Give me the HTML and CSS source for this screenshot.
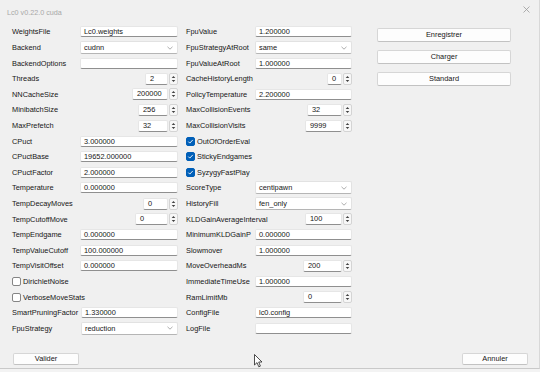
FILE: index.html
```html
<!DOCTYPE html>
<html lang="fr">
<head>
<meta charset="utf-8">
<title>Lc0 v0.22.0 cuda</title>
<link rel="stylesheet" href="styles.css">
</head>
<body>
<div class="window">
  <div class="titlebar">
    <span class="title">Lc0 v0.22.0 cuda</span>
    <svg class="close" width="7" height="7" viewBox="0 0 7 7"><path d="M0.5 0.5 L6.5 6.5 M6.5 0.5 L0.5 6.5" stroke="#9a9a9a" stroke-width="0.8"/></svg>
  </div>
  <div class="main">
    <div class="grid">
      <span class="lbl">WeightsFile</span><div class="text">Lc0.weights</div>
      <span class="lbl">Backend</span><div class="combo"><span>cudnn</span><svg class="chev" width="6" height="4" viewBox="0 0 6 4"><path d="M0.5 0.8 L3 3.2 L5.5 0.8" fill="none" stroke="#8a8a8a" stroke-width="0.7"/></svg></div>
      <span class="lbl">BackendOptions</span><div class="text"></div>
      <span class="lbl">Threads</span><div class="spin w33"><div class="spin-in">2</div><div class="spin-btn"><svg width="5" height="8" viewBox="0 0 5 8"><path d="M2.5 1 L4.3 3 L0.7 3 Z M2.5 7 L4.3 5 L0.7 5 Z" fill="#444"/></svg></div></div>
      <span class="lbl">NNCacheSize</span><div class="spin w46"><div class="spin-in">200000</div><div class="spin-btn"><svg width="5" height="8" viewBox="0 0 5 8"><path d="M2.5 1 L4.3 3 L0.7 3 Z M2.5 7 L4.3 5 L0.7 5 Z" fill="#444"/></svg></div></div>
      <span class="lbl">MinibatchSize</span><div class="spin w40"><div class="spin-in">256</div><div class="spin-btn"><svg width="5" height="8" viewBox="0 0 5 8"><path d="M2.5 1 L4.3 3 L0.7 3 Z M2.5 7 L4.3 5 L0.7 5 Z" fill="#444"/></svg></div></div>
      <span class="lbl">MaxPrefetch</span><div class="spin w40"><div class="spin-in">32</div><div class="spin-btn"><svg width="5" height="8" viewBox="0 0 5 8"><path d="M2.5 1 L4.3 3 L0.7 3 Z M2.5 7 L4.3 5 L0.7 5 Z" fill="#444"/></svg></div></div>
      <span class="lbl">CPuct</span><div class="text">3.000000</div>
      <span class="lbl">CPuctBase</span><div class="text">19652.000000</div>
      <span class="lbl">CPuctFactor</span><div class="text">2.000000</div>
      <span class="lbl">Temperature</span><div class="text">0.000000</div>
      <span class="lbl">TempDecayMoves</span><div class="spin w35"><div class="spin-in">0</div><div class="spin-btn"><svg width="5" height="8" viewBox="0 0 5 8"><path d="M2.5 1 L4.3 3 L0.7 3 Z M2.5 7 L4.3 5 L0.7 5 Z" fill="#444"/></svg></div></div>
      <span class="lbl">TempCutoffMove</span><div class="spin w43"><div class="spin-in">0</div><div class="spin-btn"><svg width="5" height="8" viewBox="0 0 5 8"><path d="M2.5 1 L4.3 3 L0.7 3 Z M2.5 7 L4.3 5 L0.7 5 Z" fill="#444"/></svg></div></div>
      <span class="lbl">TempEndgame</span><div class="text">0.000000</div>
      <span class="lbl">TempValueCutoff</span><div class="text">100.000000</div>
      <span class="lbl">TempVisitOffset</span><div class="text">0.000000</div>
      <label class="check"><span class="box"></span>DirichletNoise</label>
      <label class="check"><span class="box"></span>VerboseMoveStats</label>
      <span class="lbl">SmartPruningFactor</span><div class="text shift">1.330000</div>
      <span class="lbl">FpuStrategy</span><div class="combo shift"><span>reduction</span><svg class="chev" width="6" height="4" viewBox="0 0 6 4"><path d="M0.5 0.8 L3 3.2 L5.5 0.8" fill="none" stroke="#8a8a8a" stroke-width="0.7"/></svg></div>
    </div>
    <div class="grid mid">
      <span class="lbl">FpuValue</span><div class="text">1.200000</div>
      <span class="lbl">FpuStrategyAtRoot</span><div class="combo"><span>same</span><svg class="chev" width="6" height="4" viewBox="0 0 6 4"><path d="M0.5 0.8 L3 3.2 L5.5 0.8" fill="none" stroke="#8a8a8a" stroke-width="0.7"/></svg></div>
      <span class="lbl">FpuValueAtRoot</span><div class="text">1.000000</div>
      <span class="lbl">CacheHistoryLength</span><div class="spin w25"><div class="spin-in">0</div><div class="spin-btn"><svg width="5" height="8" viewBox="0 0 5 8"><path d="M2.5 1 L4.3 3 L0.7 3 Z M2.5 7 L4.3 5 L0.7 5 Z" fill="#444"/></svg></div></div>
      <span class="lbl">PolicyTemperature</span><div class="text">2.200000</div>
      <span class="lbl">MaxCollisionEvents</span><div class="spin w45"><div class="spin-in">32</div><div class="spin-btn"><svg width="5" height="8" viewBox="0 0 5 8"><path d="M2.5 1 L4.3 3 L0.7 3 Z M2.5 7 L4.3 5 L0.7 5 Z" fill="#444"/></svg></div></div>
      <span class="lbl">MaxCollisionVisits</span><div class="spin w47"><div class="spin-in">9999</div><div class="spin-btn"><svg width="5" height="8" viewBox="0 0 5 8"><path d="M2.5 1 L4.3 3 L0.7 3 Z M2.5 7 L4.3 5 L0.7 5 Z" fill="#444"/></svg></div></div>
      <label class="check"><span class="box on"><svg width="7" height="7" viewBox="0 0 7 7"><path d="M1.3 3.6 L2.8 5.1 L5.8 1.9" fill="none" stroke="#fff" stroke-width="0.9"/></svg></span>OutOfOrderEval</label>
      <label class="check"><span class="box on"><svg width="7" height="7" viewBox="0 0 7 7"><path d="M1.3 3.6 L2.8 5.1 L5.8 1.9" fill="none" stroke="#fff" stroke-width="0.9"/></svg></span>StickyEndgames</label>
      <label class="check"><span class="box on"><svg width="7" height="7" viewBox="0 0 7 7"><path d="M1.3 3.6 L2.8 5.1 L5.8 1.9" fill="none" stroke="#fff" stroke-width="0.9"/></svg></span>SyzygyFastPlay</label>
      <span class="lbl">ScoreType</span><div class="combo"><span>centipawn</span><svg class="chev" width="6" height="4" viewBox="0 0 6 4"><path d="M0.5 0.8 L3 3.2 L5.5 0.8" fill="none" stroke="#8a8a8a" stroke-width="0.7"/></svg></div>
      <span class="lbl">HistoryFill</span><div class="combo"><span>fen_only</span><svg class="chev" width="6" height="4" viewBox="0 0 6 4"><path d="M0.5 0.8 L3 3.2 L5.5 0.8" fill="none" stroke="#8a8a8a" stroke-width="0.7"/></svg></div>
      <span class="lbl">KLDGainAverageInterval</span><div class="spin w47"><div class="spin-in">100</div><div class="spin-btn"><svg width="5" height="8" viewBox="0 0 5 8"><path d="M2.5 1 L4.3 3 L0.7 3 Z M2.5 7 L4.3 5 L0.7 5 Z" fill="#444"/></svg></div></div>
      <span class="lbl">MinimumKLDGainP</span><div class="text">0.000000</div>
      <span class="lbl">Slowmover</span><div class="text">1.000000</div>
      <span class="lbl">MoveOverheadMs</span><div class="spin w49"><div class="spin-in">200</div><div class="spin-btn"><svg width="5" height="8" viewBox="0 0 5 8"><path d="M2.5 1 L4.3 3 L0.7 3 Z M2.5 7 L4.3 5 L0.7 5 Z" fill="#444"/></svg></div></div>
      <span class="lbl">ImmediateTimeUse</span><div class="text">1.000000</div>
      <span class="lbl">RamLimitMb</span><div class="spin w49"><div class="spin-in">0</div><div class="spin-btn"><svg width="5" height="8" viewBox="0 0 5 8"><path d="M2.5 1 L4.3 3 L0.7 3 Z M2.5 7 L4.3 5 L0.7 5 Z" fill="#444"/></svg></div></div>
      <span class="lbl">ConfigFile</span><div class="text">lc0.config</div>
      <span class="lbl">LogFile</span><div class="text"></div>
    </div>
    <div class="actions">
      <button class="btn">Enregistrer</button>
      <button class="btn">Charger</button>
      <button class="btn">Standard</button>
    </div>
  </div>
  <div class="footer">
    <button class="btn small">Valider</button>
    <button class="btn small">Annuler</button>
  </div>
  <svg class="cursor" width="9" height="14" viewBox="0 0 9 14"><path d="M0.5 0.5 L0.5 11 L3 8.6 L4.8 12.8 L6.4 12.1 L4.7 8 L8 8 Z" fill="#fff" stroke="#222" stroke-width="0.8" stroke-linejoin="round"/></svg>
</div>
</body>
</html>
```
FILE: styles.css
```css
* { box-sizing: border-box; }
html, body { margin: 0; padding: 0; }
body {
  width: 540px;
  height: 372px;
  background: #f3f3f3;
  font-family: "Liberation Sans", Arial, sans-serif;
  font-size: 7.4px;
  color: #161616;
  overflow: hidden;
}
.window {
  position: relative;
  height: 369px;
  background: #f0f0f0;
  border-bottom: 1px solid #c9c9c9;
  border-right: 1px solid #d8d8d8;
}
.titlebar {
  height: 24px;
  display: flex;
  align-items: flex-start;
  justify-content: space-between;
  padding: 9px 9px 0 7px;
}
.title { color: #a8a8a8; font-size: 7.2px; line-height: 8px; }
.close { margin-top: -3px; }
.main {
  display: flex;
  padding-left: 12px;
  height: 312px;
}
.grid {
  display: grid;
  grid-template-columns: 68px 98px;
  grid-auto-rows: 15.6px;
  align-items: center;
  margin-top: 0.2px;
}
.grid.mid {
  margin-left: 8px;
  grid-template-columns: 69px 97px;
}
.lbl { white-space: nowrap; line-height: 9px; }
.text {
  height: 11px;
  background: #fff;
  border: 1px solid #e6e6e6;
  border-bottom-color: #8f8f8f;
  border-radius: 2px;
  padding-left: 3px;
  line-height: 9px;
  white-space: nowrap;
}
.shift { margin-left: 1px; }
.combo {
  height: 13px;
  background: #fff;
  border: 1px solid #e2e2e2;
  border-bottom-color: #b5b5b5;
  border-radius: 2px;
  padding: 0 3px 0 3px;
  display: flex;
  align-items: center;
  justify-content: space-between;
}
.chev { margin-right: 1px; }
.spin {
  justify-self: end;
  height: 12px;
  display: flex;
  gap: 1px;
}
.spin-in {
  flex: 1;
  background: #fff;
  border: 1px solid #e6e6e6;
  border-bottom-color: #8f8f8f;
  border-radius: 2px;
  padding-left: 4px;
  line-height: 10px;
}
.spin-btn {
  width: 9px;
  background: #f7f7f7;
  border: 1px solid #d4d4d4;
  border-radius: 2px;
  display: flex;
  align-items: center;
  justify-content: center;
}
.w25 { width: 25px; }
.w33 { width: 33px; }
.w35 { width: 35px; }
.w40 { width: 40px; }
.w43 { width: 43px; }
.w45 { width: 45px; }
.w46 { width: 46px; }
.w47 { width: 47px; }
.w49 { width: 49px; }
.check {
  grid-column: span 2;
  display: flex;
  align-items: center;
  gap: 2px;
  white-space: nowrap;
}
.box {
  width: 9px;
  height: 9px;
  background: #fff;
  border: 1px solid #858585;
  border-radius: 2px;
  display: flex;
  align-items: center;
  justify-content: center;
}
.box.on {
  background: #005fb8;
  border-color: #005fb8;
}
.actions {
  margin-left: 25px;
  padding-top: 4px;
  display: flex;
  flex-direction: column;
  gap: 8.5px;
}
.btn {
  width: 134px;
  height: 13.5px;
  font-family: inherit;
  font-size: 7.4px;
  color: #161616;
  background: #fdfdfd;
  border: 1px solid #d6d6d6;
  border-bottom-color: #c2c2c2;
  border-radius: 2px;
  padding: 0;
  line-height: 10px;
}
.btn.small { width: 66px; height: 12px; }
.footer {
  display: flex;
  justify-content: space-between;
  padding: 17px 11px 0 13px;
}
.cursor {
  position: absolute;
  left: 254px;
  top: 354px;
}
```
